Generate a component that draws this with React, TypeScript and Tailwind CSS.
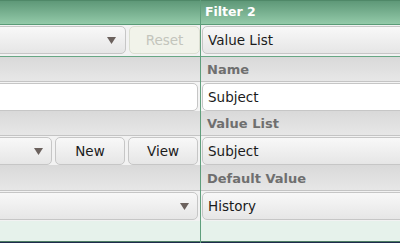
import React from "react";

const font = { fontFamily: '"DejaVu Sans", Verdana, sans-serif' };

function Arrow() {
  return (
    <svg width="9" height="7" viewBox="0 0 9 7" className="shrink-0">
      <path d="M0 0 H9 L4.5 7 Z" fill="#6b615d" />
    </svg>
  );
}

const ctrl =
  "h-[28px] pt-[1px] rounded-[5px] border border-[#c6c6c6] bg-linear-to-b from-[#f8f8f8] to-[#e6e6e6] flex items-center text-[13.5px] text-[#1b1b1b]";

function Label({ text, h = "h-[25px]" }: { text?: string; h?: string }) {
  return (
    <div
      className={`${h} pt-[2px] flex items-center pl-[6px] border-b border-[#c4c4c4] bg-linear-to-b from-[#d9d9d9] to-[#e7e7e7] text-[13px] font-bold text-[#6f6f6f]`}>
      {text}
    </div>
  );
}

function Header({ title }: { title?: string }) {
  return (
    <div className="h-[25px] border-t border-t-[#4f8868] border-b border-b-[#5a9b77] bg-linear-to-b from-[#5e9878] to-[#93caa9] flex items-center pl-[4px] text-[12.5px] font-bold text-white">
      {title}
    </div>
  );
}

export default function App() {
  return (
    <div className="w-[400px] h-[243px] overflow-hidden flex bg-white" style={font}>
      {/* Filter 1 (cut off) */}
      <div className="w-[201px] shrink-0 flex flex-col border-r border-[#5f9f7c]">
        <Header />
        <div className="h-[32px] pt-[1px] flex gap-[3px] border-b border-[#68a784] bg-[#f2f2f2]">
          <div className={`${ctrl} -ml-[8px] w-[134px] justify-end pr-[9px]`}>
            <Arrow />
          </div>
          <div className="h-[28px] pt-[1px] w-[71px] rounded-[5px] border border-[#dcdfd2] bg-[#f1f3ea] flex items-center justify-center text-[13.5px] text-[#c3c5bc]">
            Reset
          </div>
        </div>
        <Label />
        <div className="h-[29px] pt-[1px] flex bg-[#f4f4f4] pr-[2px]">
          <div className="h-[28px] -ml-[8px] flex-1 rounded-[5px] border border-[#c6c6c6] bg-white" />
        </div>
        <Label />
        <div className="h-[29px] pt-[1px] flex gap-[3px] bg-[#f2f2f2] pr-[2px]">
          <div className={`${ctrl} -ml-[8px] w-[60px] justify-end pr-[8px]`}>
            <Arrow />
          </div>
          <div className={`${ctrl} w-[70px] justify-center`}>New</div>
          <div className={`${ctrl} w-[70px] justify-center`}>View</div>
        </div>
        <Label h="h-[26px]" />
        <div className="h-[30px] pt-[1px] flex bg-[#f2f2f2] pr-[2px]">
          <div className={`${ctrl} -ml-[8px] flex-1 justify-end pr-[8px]`}>
            <Arrow />
          </div>
        </div>
        <div className="flex-1 bg-[#e6f2eb]" />
        <div className="h-[1px] bg-[#4a7c61]" />
        <div className="h-[1px] bg-[#1f2c4c]" />
      </div>

      {/* Filter 2 */}
      <div className="w-[230px] shrink-0 flex flex-col">
        <Header title="Filter 2" />
        <div className="h-[32px] pt-[1px] pl-[1px] flex border-b border-[#68a784] bg-[#f2f2f2]">
          <div className={`${ctrl} flex-1 pl-[5px]`}>Value List</div>
        </div>
        <Label text="Name" />
        <div className="h-[29px] pt-[1px] pl-[1px] flex bg-[#f4f4f4]">
          <div className="h-[28px] pt-[1px] flex-1 rounded-[5px] border border-[#c6c6c6] bg-white flex items-center pl-[5px] text-[13.5px] text-[#1b1b1b]">
            Subject
          </div>
        </div>
        <Label text="Value List" />
        <div className="h-[29px] pt-[1px] pl-[1px] flex bg-[#f2f2f2]">
          <div className={`${ctrl} flex-1 pl-[5px]`}>Subject</div>
        </div>
        <Label text="Default Value" h="h-[26px]" />
        <div className="h-[30px] pt-[1px] pl-[1px] flex bg-[#f2f2f2]">
          <div className={`${ctrl} flex-1 pl-[5px]`}>History</div>
        </div>
        <div className="flex-1 bg-[#e6f2eb]" />
        <div className="h-[1px] bg-[#4a7c61]" />
        <div className="h-[1px] bg-[#1f2c4c]" />
      </div>
    </div>
  );
}
